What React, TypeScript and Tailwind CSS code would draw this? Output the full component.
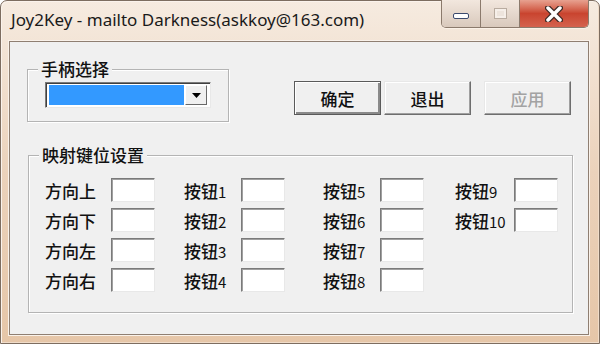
import React from 'react';

const cjk = '[font-family:"Noto_Sans_CJK_SC","Noto_Sans",sans-serif]';

function KeyBox() {
    return (
        <div className="w-[44px] h-[24px] bg-white border border-t-[#7a7a7a] border-l-[#7a7a7a] border-r-[#e8e8e8] border-b-[#e8e8e8] shadow-[inset_1px_1px_0_#a0a0a0]" />
    );
}

function GroupBox({ title, className, children }: { title: string; className: string; children?: React.ReactNode }) {
    return (
        <div className={`relative border border-[#b4b4b4] shadow-[inset_1px_1px_0_#ffffff,1px_1px_0_#ffffff] ${className}`}>
            <span className="absolute left-[10px] top-[-12px] px-[3px] bg-[#f0f0f0] text-[17px] leading-[22px] font-medium text-[#111]">
                {title}
            </span>
            {children}
        </div>
    );
}

function WinButton({ label, primary, disabled }: { label: string; primary?: boolean; disabled?: boolean }) {
    return (
        <button
            className={`w-[87px] h-[34px] bg-[#f0f0f0] text-[17px] font-medium leading-none ${
                disabled ? 'text-[#a3a3a3]' : 'text-[#111]'
            } ${
                primary
                    ? 'border border-[#5a5a5a] shadow-[inset_1px_1px_0_#ffffff,inset_-2px_-2px_0_#8a8a8a]'
                    : 'border border-t-[#e8e8e8] border-l-[#e8e8e8] border-r-[#6e6e6e] border-b-[#6e6e6e] shadow-[inset_-1px_-1px_0_#a0a0a0,inset_1px_1px_0_#ffffff]'
            }`}
        >
            {label}
        </button>
    );
}

const columns = [
    { width: 'w-[139px]', label: 'w-[66px]', items: ['方向上', '方向下', '方向左', '方向右'] },
    { width: 'w-[139px]', label: 'w-[57px]', items: ['按钮1', '按钮2', '按钮3', '按钮4'] },
    { width: 'w-[132px]', label: 'w-[57px]', items: ['按钮5', '按钮6', '按钮7', '按钮8'] },
    { width: 'w-[110px]', label: 'w-[59px]', items: ['按钮9', '按钮10'] },
];

// split "按钮10" into the CJK part and the (smaller) number
function Label({ text }: { text: string }) {
    const m = text.match(/^(\D+)(\d*)$/);
    const head = m ? m[1] : text;
    const num = m ? m[2] : '';
    return (
        <>
            {head}
            {num && <span className="text-[15px] font-normal">{num}</span>}
        </>
    );
}

export default function App() {
    return (
        <div className="w-[600px] h-[344px] bg-white">
            <div className="w-[600px] h-[344px] flex flex-col rounded-t-[7px] border border-[#7d6d60] bg-gradient-to-b from-[#f6ebe0] via-[#ebd2bb] to-[#e6c6a8] shadow-[inset_1px_1px_0_#fbf3ec,inset_-1px_-1px_0_#f0dcc9]">
                {/* title bar */}
                <div className="h-[40px] flex items-start justify-between">
                    <div className="pl-[10px] pt-[7px] text-[17px] leading-[24px] text-[#1a1a1a] [font-family:'Noto_Sans',sans-serif]">
                        Joy2Key - mailto Darkness(askkoy@163.com)
                    </div>
                    <div className="mr-[10px] mt-[-1px] flex h-[28px] rounded-b-[5px] border border-t-0 border-[#8b7a6c] overflow-hidden shadow-[0_1px_0_#fbf1e7]">
                        <div className="w-[39px] h-full flex items-center justify-center bg-gradient-to-b from-[#f2e7de] to-[#d9c9bc] border-r border-[#8b7a6c]">
                            <div className="w-[16px] h-[6px] mt-[5px] rounded-[2px] bg-white border border-[#3b4a6e]" />
                        </div>
                        <div className="w-[39px] h-full flex items-center justify-center bg-gradient-to-b from-[#f2e7de] to-[#d9c9bc] border-r border-[#8b7a6c]">
                            <div className="w-[13px] h-[11px] border border-[#b9aca0] bg-[#ede4dc] shadow-[inset_0_0_0_2px_#f6efe9]" />
                        </div>
                        <div className="w-[68px] h-full flex items-center justify-center bg-gradient-to-b from-[#e7a190] via-[#c9442f] to-[#d4624e]">
                            <svg width="18" height="16" viewBox="0 0 18 16">
                                <path d="M3 2 L15 14 M15 2 L3 14" stroke="#3f2a25" strokeWidth="6" strokeLinecap="round" />
                                <path d="M3 2 L15 14 M15 2 L3 14" stroke="#ffffff" strokeWidth="3.5" strokeLinecap="round" />
                            </svg>
                        </div>
                    </div>
                </div>

                {/* client area */}
                <div className={`ml-[8px] mr-[10px] mb-[8px] flex-1 bg-[#f0f0f0] border border-[#8f7f72] shadow-[0_0_0_1px_#faf2ea] ${cjk}`}>
                    <div className="flex items-start mt-[27px]">
                        <GroupBox title="手柄选择" className="ml-[17px] w-[202px] h-[53px]">
                            <div className="ml-[17px] mt-[12px] w-[166px] h-[26px] flex bg-white border border-t-[#7a7a7a] border-l-[#7a7a7a] border-r-[#e8e8e8] border-b-[#e8e8e8] shadow-[inset_1px_1px_0_#404040] p-[2px] pl-[3px] pt-[2px]">
                                <div className="w-[135px] h-full bg-[#3399ff]" />
                                <div className="ml-[1px] w-[22px] h-full flex items-center justify-center bg-[#f0f0f0] border border-t-[#ffffff] border-l-[#ffffff] border-r-[#696969] border-b-[#696969]">
                                    <svg width="9" height="5" viewBox="0 0 9 5">
                                        <path d="M0 0 H9 L4.5 5 Z" fill="#000" />
                                    </svg>
                                </div>
                            </div>
                        </GroupBox>
                        <div className="ml-[65px] mt-[12px] flex">
                            <WinButton label="确定" primary />
                            <div className="ml-[3px]">
                                <WinButton label="退出" />
                            </div>
                            <div className="ml-[13px]">
                                <WinButton label="应用" disabled />
                            </div>
                        </div>
                    </div>

                    <GroupBox title="映射键位设置" className="ml-[18px] mt-[33px] w-[545px] h-[158px]">
                        <div className="flex pl-[16px] pt-[22px]">
                            {columns.map((col, ci) => (
                                <div key={ci} className={`${col.width} flex flex-col gap-[6px]`}>
                                    {col.items.map((label) => (
                                        <div key={label} className="flex items-center h-[24px]">
                                            <span className={`${col.label} text-[17px] font-medium leading-none text-[#111]`}>
                                                <Label text={label} />
                                            </span>
                                            <KeyBox />
                                        </div>
                                    ))}
                                </div>
                            ))}
                        </div>
                    </GroupBox>
                </div>
            </div>
        </div>
    );
}
